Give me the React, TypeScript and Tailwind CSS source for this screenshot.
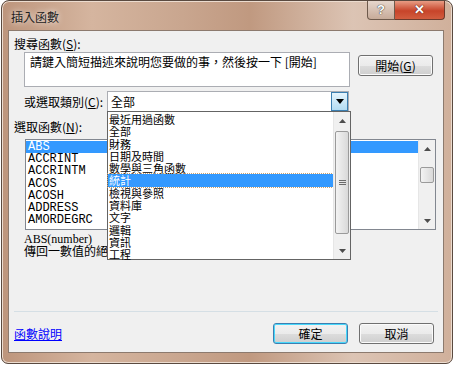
import React from 'react';

const cjk = { fontFamily: '"Noto Sans CJK TC", "Noto Sans", sans-serif' };
const mono = { fontFamily: '"Liberation Mono", "Noto Sans CJK TC", monospace' };

const categories = [
  '最近用過函數',
  '全部',
  '財務',
  '日期及時間',
  '數學與三角函數',
  '統計',
  '檢視與參照',
  '資料庫',
  '文字',
  '邏輯',
  '資訊',
  '工程',
];

const functions = ['ABS', 'ACCRINT', 'ACCRINTM', 'ACOS', 'ACOSH', 'ADDRESS', 'AMORDEGRC'];

const Arrow = ({ up }: { up?: boolean }) => (
  <svg width="7" height="4" viewBox="0 0 7 4">
    <path d={up ? 'M0 4 L3.5 0 L7 4 Z' : 'M0 0 L3.5 4 L7 0 Z'} fill="#4d4d4d" />
  </svg>
);

const ScrollBar = ({ thumbTop, thumbHeight, grip }: { thumbTop: number; thumbHeight: number; grip?: boolean }) => (
  <div className="w-[17px] h-full bg-[#f0f0f0] flex flex-col items-center border-l border-[#e6e6e6]">
    <div className="h-[17px] w-full flex items-center justify-center">
      <Arrow up />
    </div>
    <div className="flex-1 w-full relative">
      <div
        className="absolute left-[1px] right-[1px] rounded-[2px] border border-[#9a9a9a] bg-gradient-to-r from-[#f3f3f3] to-[#d9d9d9] flex items-center justify-center"
        style={{ top: thumbTop, height: thumbHeight }}
      >
        {grip && (
          <div className="flex flex-col gap-[1px]">
            <div className="w-[7px] h-[1px] bg-[#6b6b6b]" />
            <div className="w-[7px] h-[1px] bg-[#6b6b6b]" />
            <div className="w-[7px] h-[1px] bg-[#6b6b6b]" />
          </div>
        )}
      </div>
    </div>
    <div className="h-[17px] w-full flex items-center justify-center">
      <Arrow />
    </div>
  </div>
);

const Button = ({ children, primary }: { children: React.ReactNode; primary?: boolean }) => (
  <div
    className={`w-[75px] h-[21px] rounded-[3px] border flex items-center justify-center text-[12px] text-black bg-[linear-gradient(#f2f2f2_0%,#ebebeb_50%,#dddddd_51%,#cfcfcf_100%)] ${
      primary ? 'border-[#3c7fb1] shadow-[inset_0_0_0_1px_#48d8fb]' : 'border-[#707070] shadow-[inset_0_0_0_1px_#fbfbfb]'
    }`}
    style={cjk}
  >
    {children}
  </div>
);

export default function App() {
  return (
    <div className="w-[454px] h-[365px] bg-white overflow-hidden">
      <div className="ml-[1px] w-[452px] h-[364px] rounded-t-[8px] rounded-b-[7px] border border-[#5a4a40] bg-[linear-gradient(90deg,#bd957c_0%,#d5b59f_20%,#c9a68f_40%,#c09980_55%,#dcc4b4_78%,#d0b09b_100%)] shadow-[inset_0_0_0_1px_#ecdccf] flex flex-col">
        <div className="h-[29px] flex items-start justify-between pl-[9px] pr-[7px]">
          <span className="mt-[7px] text-[12px] text-[#1e1e1e] [text-shadow:0_0_6px_#ffffff]" style={cjk}>
            插入函數
          </span>
          <div className="flex">
            <div className="w-[28px] h-[19px] rounded-bl-[4px] border border-t-0 border-[#6e5a4c] bg-[linear-gradient(#e6d6cc,#c7ab99)] flex items-center justify-center">
              <span className="text-[13px] font-bold text-white [text-shadow:0_0_1px_#333,0_0_1px_#333]" style={{ fontFamily: '"Liberation Sans", sans-serif' }}>?</span>
            </div>
            <div className="w-[50px] h-[19px] rounded-br-[4px] border border-t-0 border-l-0 border-[#6e3a2c] bg-[linear-gradient(#e89c84,#c7442a_55%,#d25d3f)] flex items-center justify-center">
              <span className="text-[13px] font-bold text-white [text-shadow:0_0_1px_#5a1a10,0_0_1px_#5a1a10]" style={{ fontFamily: '"Liberation Sans", sans-serif' }}>✕</span>
            </div>
          </div>
        </div>

        <div className="ml-[6px] w-[436px] h-[323px] bg-[#f0f0f0] border border-[#8c7a6e] relative text-[12px] text-black" style={cjk}>
          <div className="pl-[5px] pt-[6px] leading-[14px]">
            搜尋函數(<u>S</u>):
          </div>
          <div className="flex items-start pl-[15px] mt-[1px]">
            <div className="w-[326px] h-[35px] bg-white border border-[#abadb3] pl-[5px] pt-[2px] leading-[14px]">
              請鍵入簡短描述來說明您要做的事，然後按一下 [開始]
            </div>
            <div className="ml-[8px] mt-[3px]">
              <Button>開始(<u>G</u>)</Button>
            </div>
          </div>

          <div className="flex items-center pl-[15px] mt-[4px]">
            <span className="w-[83px] leading-[14px]">或選取類別(<u>C</u>):</span>
            <div className="relative">
              <div className="w-[242px] h-[21px] bg-white border border-[#abadb3] flex items-center">
                <span className="flex-1 pl-[3px] leading-[14px]">全部</span>
                <div className="w-[17px] h-[19px] border border-[#3c7fb1] bg-[linear-gradient(#e5f4fc,#b3dcf3)] flex items-center justify-center">
                  <svg width="8" height="5" viewBox="0 0 8 5">
                    <path d="M0 0 L4 5 L8 0 Z" fill="#000" />
                  </svg>
                </div>
              </div>
              <div className="absolute left-0 top-[20px] w-[244px] h-[149px] bg-white border border-[#646464] flex z-10">
                <div className="flex-1 flex flex-col pt-[1px]">
                  {categories.map((c) => (
                    <div
                      key={c}
                      className={`h-[12.3px] leading-[12.3px] pl-[1px] text-[11px] ${
                        c === '統計' ? 'bg-[#3399ff] text-white outline outline-1 outline-dotted outline-[#c8a070]' : ''
                      }`}
                    >
                      {c}
                    </div>
                  ))}
                </div>
                <ScrollBar thumbTop={2} thumbHeight={103} grip />
              </div>
            </div>
          </div>

          <div className="pl-[5px] mt-[8px] leading-[14px]">
            選取函數(<u>N</u>):
          </div>
          <div className="ml-[16px] mt-[5px] w-[411px] h-[91px] bg-white border border-[#828790] flex">
            <div className="flex-1 flex flex-col pt-[1px]" style={mono}>
              {functions.map((f) => (
                <div
                  key={f}
                  className={`h-[12.2px] leading-[12px] pl-[2px] text-[12px] ${f === 'ABS' ? 'bg-[#3399ff] text-white' : ''}`}
                >
                  {f}
                </div>
              ))}
            </div>
            <ScrollBar thumbTop={10} thumbHeight={16} />
          </div>

          <div className="pl-[15px] mt-[3px] leading-[12px]">
            <div style={{ fontFamily: '"Liberation Serif", serif' }} className="text-[12px]">ABS(number)</div>
            <div>傳回一數值的絕對值，即不帶正負號的數值。</div>
          </div>

          <div className="mx-[5px] mt-[54px] h-[1px] bg-[#d5dfe5]" />

          <div className="flex items-center pl-[5px] pr-[9px] mt-[11px]">
            <span className="flex-1 text-[#0000ff] underline leading-[14px]">函數說明</span>
            <Button primary>確定</Button>
            <div className="w-[11px]" />
            <Button>取消</Button>
          </div>
        </div>
      </div>
    </div>
  );
}
